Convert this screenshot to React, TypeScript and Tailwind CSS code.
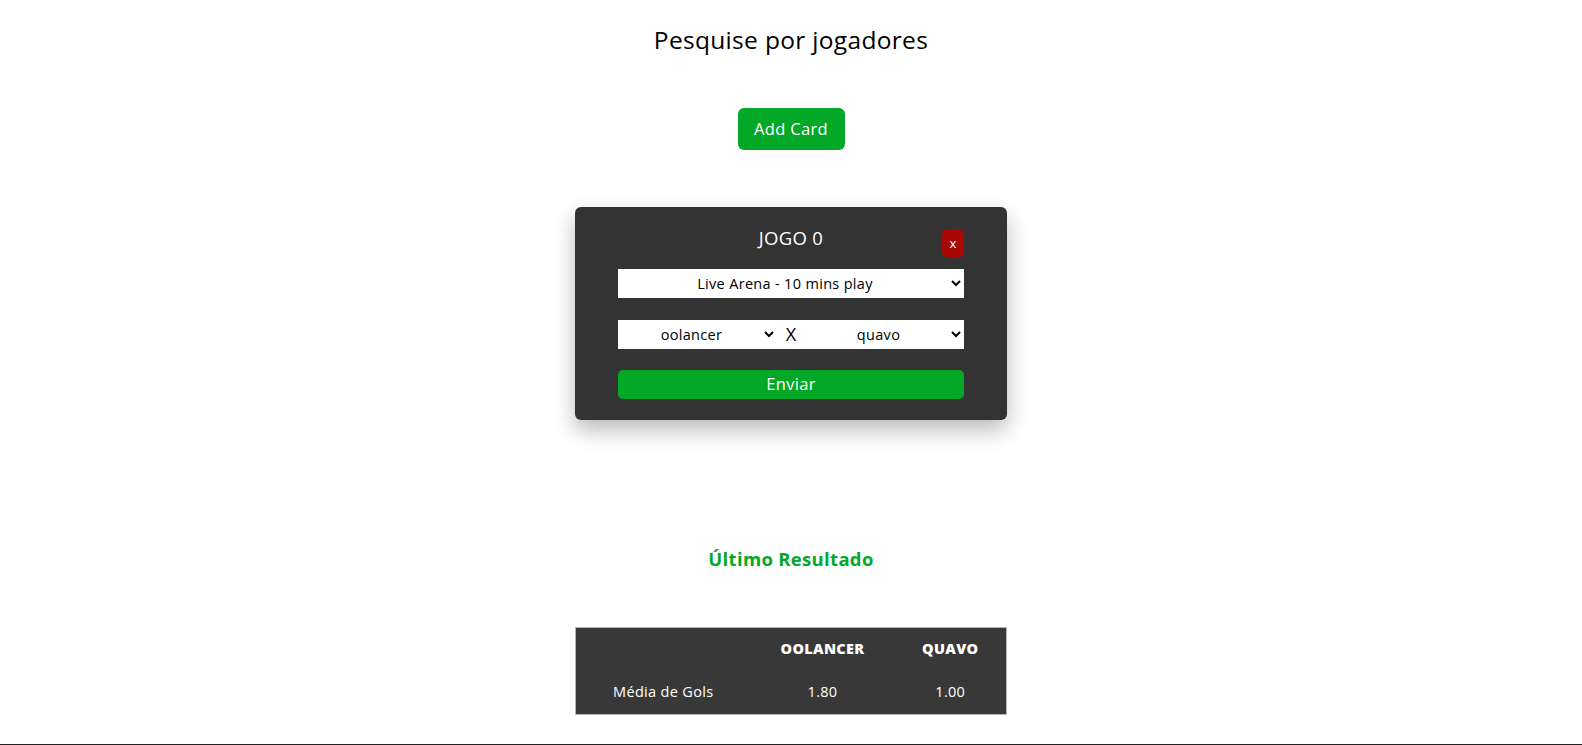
const font = { fontFamily: '"Open Sans", "Noto Sans", sans-serif' };

const Card = () => {
    return (
        <div className="w-[432px] rounded-md bg-[#333333] px-[43px] pt-[22px] pb-[21px] shadow-[0_10px_22px_rgba(0,0,0,0.28)]">
            <div className="relative flex h-[40px] items-start justify-center">
                <h2 className="mt-[-6px] text-[18.5px] leading-[30px] text-white">JOGO 0</h2>
                <button className="absolute right-0 top-[0px] h-[28px] w-[22px] rounded-[5px] bg-[#a80707] text-[13px] leading-[28px] text-white">
                    x
                </button>
            </div>
            <select className="h-[29px] w-full bg-white text-center text-[14.5px] text-black outline-none">
                <option>Live Arena - 10 mins play</option>
            </select>
            <div className="mt-[22px] flex h-[29px] items-center bg-white">
                <select className="h-[29px] w-[159px] bg-white text-center text-[14.5px] text-black outline-none">
                    <option>oolancer</option>
                </select>
                <span className="w-[28px] text-center text-[18px] leading-[29px] text-black">X</span>
                <select className="h-[29px] flex-1 bg-white text-center text-[14.5px] text-black outline-none">
                    <option>quavo</option>
                </select>
            </div>
            <button className="mt-[21px] h-[29px] w-full rounded-[5px] bg-[#02a826] text-[16.5px] text-white">
                Enviar
            </button>
        </div>
    );
};

const App = () => {
    return (
        <div style={font} className="flex min-h-[745px] flex-col items-center bg-white tracking-[0.02em]">
            <h1 className="mt-[24px] text-[24.5px] leading-[32px] text-black">Pesquise por jogadores</h1>

            <button className="mt-[52px] h-[42px] w-[107px] rounded-md bg-[#02a826] text-[16.5px] text-white">
                Add Card
            </button>

            <div className="mt-[57px]">
                <Card />
            </div>

            <h3 className="mt-[126px] text-[18.5px] font-bold leading-[26px] text-[#02a826]">Último Resultado</h3>

            <table className="mt-[55px] w-[432px] border border-[#b5b5b5] bg-[#383838] text-[14.5px] text-white">
                <thead>
                    <tr className="h-[43px]">
                        <th className="w-[175px]"></th>
                        <th className="w-[144px] font-extrabold">OOLANCER</th>
                        <th className="font-extrabold">QUAVO</th>
                    </tr>
                </thead>
                <tbody>
                    <tr className="h-[44px]">
                        <td className="text-center">Média de Gols</td>
                        <td className="text-center">1.80</td>
                        <td className="text-center">1.00</td>
                    </tr>
                </tbody>
            </table>

            <div className="mt-auto h-px w-full bg-[#222222]"></div>
        </div>
    );
};

export default App;
